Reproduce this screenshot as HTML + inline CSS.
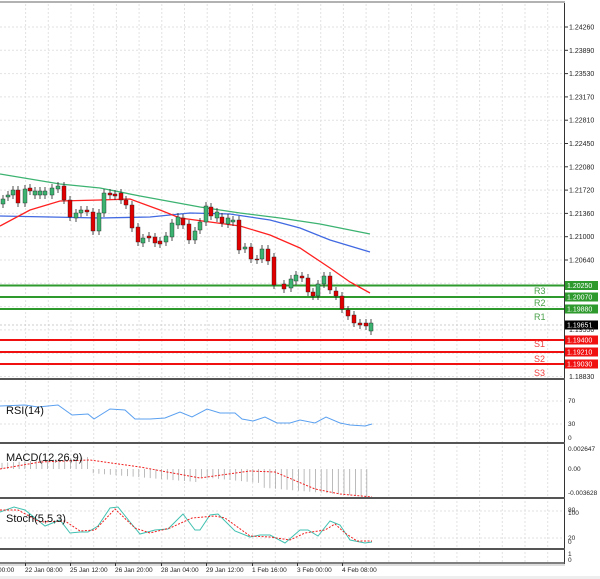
<!DOCTYPE html>
<html><head><meta charset="utf-8"><style>
html,body{margin:0;padding:0;background:#fff;width:600px;height:579px;overflow:hidden}
svg{display:block}
text{font-family:"Liberation Sans",sans-serif;}
</style></head><body>
<svg id="s" width="600" height="579" viewBox="0 0 600 579" xmlns="http://www.w3.org/2000/svg">
<rect x="0" y="0" width="600" height="579" fill="#fff"/>
<line x1="0" y1="2" x2="565" y2="2" stroke="#999" stroke-width="1.5"/>
<g id="grid" stroke="#e2e2e2" stroke-dasharray="2,2" stroke-width="1"></g>
<g id="levels"></g>
<g id="ma" fill="none" stroke-width="1.3">
<polyline stroke="#3cb371" points="0,174 60,184 100,188 140,196 200,207 240,213 280,218 320,224 370,234"/>
<polyline stroke="#4169e1" points="0,216 50,217 100,218 150,217 190,213 230,214 270,220 300,228 330,240 370,252"/>
<polyline stroke="#ff2020" points="0,226 30,210 60,201 100,200 130,199 160,210 180,218 210,222 240,226 270,235 300,248 330,268 350,282 370,293"/>
</g>
<g id="candles"></g>
<g id="ind"></g>
<g id="axis" font-size="7" fill="#222"></g>
</svg>
<script>
var NS="http://www.w3.org/2000/svg";
function el(p,t,a,txt){var e=document.createElementNS(NS,t);for(var k in a)e.setAttribute(k,a[k]);if(txt!==undefined)e.textContent=txt;document.getElementById(p).appendChild(e);return e;}
for(var x=25.6;x<565;x+=22.7){
 [[4,378],[381,442],[446,497],[501,548],[552,562]].forEach(function(r){el("grid","line",{x1:x,y1:r[0],x2:x,y2:r[1]});});
}
for(var y=27;y<378;y+=23.3){el("grid","line",{x1:0,y1:y,x2:565,y2:y});}
[401,424,511,538].forEach(function(y){el("grid","line",{x1:0,y1:y,x2:565,y2:y});});
el("axis","line",{x1:564.5,y1:3,x2:564.5,y2:564,stroke:"#333","stroke-width":1});
[[379,2],[443,2],[498,2],[549,2],[563,1.5]].forEach(function(a){el("axis","line",{x1:0,y1:a[0],x2:565,y2:a[0],stroke:"#555","stroke-width":a[1]});});
el("axis","line",{x1:0,y1:565,x2:565,y2:565,stroke:"#bbb","stroke-width":1});
var pl=["1.24260","1.23890","1.23530","1.23170","1.22810","1.22450","1.22080","1.21720","1.21360","1.21000","1.20640"];
pl.forEach(function(t,i){var y=27+i*23.3;el("axis","line",{x1:565,y1:y,x2:568,y2:y,stroke:"#333"});el("axis","text",{x:569,y:y+2.5},t);});
el("axis","text",{x:569,y:332},"1.19550");
el("axis","text",{x:569,y:379},"1.18830");
var lv=[[285.5,"#2e9a2e","1.20250","R3",294],[297,"#2e9a2e","1.20070","R2",306],[309,"#2e9a2e","1.19880","R1",320],[340,"#f01010","1.19400","S1",347],[352,"#f01010","1.19210","S2",362],[364,"#f01010","1.19030","S3",376]];
lv.forEach(function(l){el("levels","line",{x1:0,y1:l[0],x2:565,y2:l[0],stroke:l[1],"stroke-width":2});
 el("levels","rect",{x:565,y:l[0]-4.5,width:33,height:9,fill:l[1]});
 el("levels","text",{x:567,y:l[0]+2.5,"font-size":7,fill:"#fff"},l[2]);
 el("levels","text",{x:534,y:l[4],"font-size":9,fill:l[1]=="#f01010"?"#f04040":"#4aa04a"},l[3]);});
el("levels","line",{x1:0,y1:325,x2:565,y2:325,stroke:"#ccc","stroke-dasharray":"2,2"});
el("levels","rect",{x:565,y:320.5,width:33,height:9,fill:"#000"});
el("levels","text",{x:567,y:327.5,"font-size":7,fill:"#fff"},"1.19651");
var c=[[3,199,204,"g"],[8,195,197,"g"],[13,190,195,"g"],[18,190,203,"r"],[25,189,203,"g"],[30,188,191,"r"],[35,191,195,"g"],[40,191,195,"g"],[45,191,195,"g"],[52,188,195,"g"],[58,186,189,"g"],[64,186,200,"r"],[70,200,217,"r"],[76,213,218,"g"],[81,210,213,"g"],[87,210,212,"r"],[93,212,231,"r"],[99,213,231,"g"],[104,193,213,"g"],[110,193,195,"r"],[115,194,196,"r"],[121,193,200,"r"],[126,200,205,"r"],[132,205,228,"r"],[138,227,242,"r"],[143,238,243,"g"],[149,236,238,"r"],[155,237,243,"r"],[160,241,244,"r"],[166,236,242,"g"],[172,223,237,"g"],[178,217,225,"g"],[183,218,225,"r"],[189,224,240,"r"],[195,231,240,"g"],[200,222,230,"g"],[206,206,222,"g"],[211,207,216,"r"],[217,212,218,"g"],[222,217,223,"r"],[228,218,224,"g"],[233,220,222,"g"],[239,220,250,"r"],[245,247,249,"g"],[251,247,259,"r"],[257,259,260,"r"],[262,249,259,"g"],[268,249,261,"r"],[274,257,285,"r"],[284,284,289,"r"],[291,279,288,"g"],[296,275,281,"g"],[302,276,278,"r"],[308,278,292,"r"],[313,292,296,"r"],[318,284,296,"g"],[324,276,284,"g"],[330,276,290,"r"],[336,291,296,"r"],[342,296,309,"r"],[348,310,316,"r"],[354,315,323,"r"],[360,323,325,"r"],[366,323,326,"r"],[371,323,331,"g"]];
c.forEach(function(k){el("candles","line",{x1:k[0],y1:k[1]-4,x2:k[0],y2:k[2]+4,stroke:"#222","stroke-width":0.8});
 el("candles","rect",{x:k[0]-2,y:k[1],width:4,height:Math.max(1,k[2]-k[1]),fill:k[3]=="g"?"#3cb371":"#e00000",stroke:"#222","stroke-width":0.4});});
el("ind","polyline",{fill:"none",stroke:"#5aa0f0","stroke-width":1,points:"0,406 25,405 38,407 58,405 72,415 88,414 94,419 110,409 125,410 135,419 150,419 165,418 180,412 192,417 207,409 220,413 235,413 242,419 253,421 265,417 277,423 290,423 300,420 315,423 326,417 340,423 350,425 365,426 372,424"});
el("ind","text",{x:6,y:414,"font-size":11,fill:"#111"},"RSI(14)");
for(var x=2;x<=372;x+=5.7){var h;if(x<90)h=-(6+x/15);else{var t=(x-90)/282;h=4+t*24;if(x>200&&x<260)h=8+(x-200)/10;}
 el("ind","line",{x1:x,y1:469,x2:x,y2:469+h,stroke:"#aaa","stroke-width":0.8});}
el("ind","polyline",{fill:"none",stroke:"#f02020","stroke-width":1,"stroke-dasharray":"2,1.5",points:"0,469 40,462 90,460 140,467 200,478 250,471 275,472 315,489 340,494 372,497"});
el("ind","text",{x:6,y:461,"font-size":11,fill:"#111"},"MACD(12,26,9)");
el("ind","polyline",{fill:"none",stroke:"#40c0b0","stroke-width":1,points:"0,512 14,507 25,510 45,526 60,520 70,533 80,532 88,532 98,526 110,508 118,507 130,522 140,534 155,530 168,529 183,514 195,530 200,530 210,515 218,514 235,531 250,537 260,535 270,535 285,543 300,530 308,530 318,536 330,521 340,525 350,540 365,543 372,542"});
el("ind","polyline",{fill:"none",stroke:"#f02020","stroke-width":1,"stroke-dasharray":"2,1.5",points:"0,510 18,510 40,522 65,521 80,531 95,530 115,509 135,528 150,533 170,528 192,518 215,516 225,518 250,536 270,537 290,540 305,533 325,530 335,524 345,533 357,541 372,541"});
el("ind","text",{x:6,y:522,"font-size":11,fill:"#111"},"Stoch(5,5,3)");
[["70",568,403],["30",568,426],["0",568,440],["0.002647",568,451],["0.00",568,471],["-0.003628",568,495],["100",568,515],["80",568,512],["20",568,540],["0",568,544],["1",568,556],["0",568,562]].forEach(function(a){el("axis","text",{x:a[1],y:a[2],"font-size":6.5},a[0]);});
[["00:00",-2],["22 Jan 08:00",25],["25 Jan 12:00",70],["26 Jan 20:00",115],["28 Jan 04:00",161],["29 Jan 12:00",206],["1 Feb 16:00",252],["3 Feb 00:00",297],["4 Feb 08:00",342]].forEach(function(a){el("axis","text",{x:a[1],y:572,"font-size":6.5},a[0]);el("axis","line",{x1:a[1]+0.5,y1:563,x2:a[1]+0.5,y2:566,stroke:"#333"});});
el("axis","rect",{x:0,y:576,width:600,height:3,fill:"#eee"});
</script>
</body></html>
